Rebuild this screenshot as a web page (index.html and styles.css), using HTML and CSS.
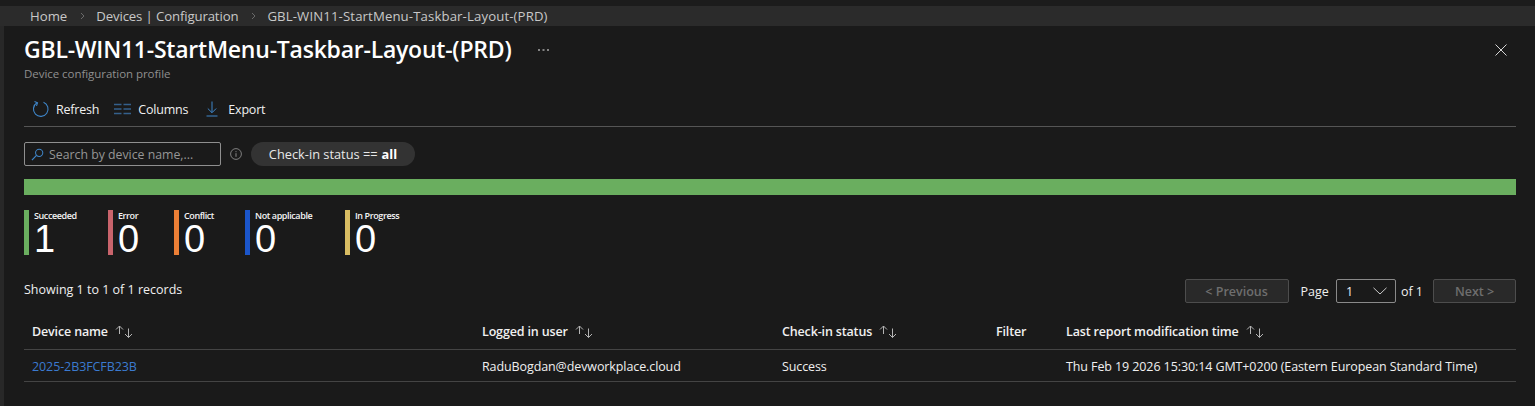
FILE: index.html
```html
<!DOCTYPE html>
<html lang="en">
<head>
  <meta charset="UTF-8">
  <title>GBL-WIN11-StartMenu-Taskbar-Layout-(PRD)</title>
  <link rel="stylesheet" href="styles.css">
</head>
<body>
  <svg class="sprites" width="0" height="0">
    <symbol id="sort" viewBox="0 0 18 13">
      <path d="M4.500 9V1M1 4.500L4.500 1 8 4.500M13.500 3.500v9M10 9l3.500 3.500L17 9" fill="none" stroke="#b4b4b4" stroke-width="1"/>
    </symbol>
  </svg>

  <nav class="breadcrumb">
    <span>Home</span>
    <svg class="crumb-sep" viewBox="0 0 6 8"><path d="M2 1l3 3-3 3" fill="none" stroke="#7a7a7a" stroke-width="0.8"/></svg>
    <span class="crumb-mid">Devices | Configuration</span>
    <svg class="crumb-sep" viewBox="0 0 6 8"><path d="M2 1l3 3-3 3" fill="none" stroke="#7a7a7a" stroke-width="0.8"/></svg>
    <span class="crumb-last">GBL-WIN11-StartMenu-Taskbar-Layout-(PRD)</span>
  </nav>

  <main class="blade">
    <header class="blade-head">
      <div class="title-row">
        <h1>GBL-WIN11-StartMenu-Taskbar-Layout-(PRD)</h1>
        <svg class="more" viewBox="0 0 11 3" width="11" height="3"><path d="M0 1h2M4.500 1h2M9 1h2" stroke="#a8a8a8" stroke-width="1.500"/></svg>
        <svg class="close" viewBox="0 0 12 12"><path d="M0.500 0.500l11 11M11.500 0.500l-11 11" stroke="#d6d6d6" stroke-width="1" fill="none"/></svg>
      </div>
      <p class="subtitle">Device configuration profile</p>
    </header>

    <div class="toolbar">
      <button class="tool tool-refresh">
        <svg viewBox="0 0 18 18" width="18" height="18"><path d="M11.500 2.300a7.300 7.300 0 1 1-6.500 0.500" fill="none" stroke="#3f86c9" stroke-width="1.100"/><path d="M2.500 1.500l3 1.300-1 3" fill="none" stroke="#3f86c9" stroke-width="1.100"/></svg>
        Refresh
      </button>
      <button class="tool tool-columns">
        <svg viewBox="0 0 17 12" width="17" height="12"><path d="M0 1.500h7.500M9.500 1.500h7.500M0 6h7.500M9.500 6h7.500M0 10.500h7.500M9.500 10.500h7.500" stroke="#34608c" stroke-width="1.300" fill="none"/></svg>
        Columns
      </button>
      <button class="tool tool-export">
        <svg viewBox="0 0 12 16" width="12" height="16"><path d="M6 0.500v11M1.800 7.500l4.200 4.200 4.200-4.200M0.500 15h11" stroke="#3f86c9" stroke-width="1" fill="none"/></svg>
        Export
      </button>
    </div>

    <div class="filters">
      <label class="search">
        <svg viewBox="0 0 14 14" width="13" height="13"><circle cx="8.800" cy="5.200" r="3.900" fill="none" stroke="#3f86c9" stroke-width="1.100"/><path d="M5.900 8L1 13" stroke="#3f86c9" stroke-width="1.300"/></svg>
        <span>Search by device name,...</span>
      </label>
      <svg class="info" viewBox="0 0 12 12" width="12" height="12"><circle cx="6" cy="6" r="5.400" fill="none" stroke="#8a8a8a" stroke-width="0.900"/><path d="M6 5.200v3.600M6 3.200v1" stroke="#8a8a8a" stroke-width="1"/></svg>
      <span class="pill">Check-in status == <b>all</b></span>
    </div>

    <div class="status-bar"></div>

    <div class="stats">
      <div class="stat stat-success"><span class="stat-label">Succeeded</span><span class="stat-num">1</span></div>
      <div class="stat stat-error"><span class="stat-label">Error</span><span class="stat-num">0</span></div>
      <div class="stat stat-conflict"><span class="stat-label">Conflict</span><span class="stat-num">0</span></div>
      <div class="stat stat-na"><span class="stat-label">Not applicable</span><span class="stat-num">0</span></div>
      <div class="stat stat-progress"><span class="stat-label">In Progress</span><span class="stat-num">0</span></div>
    </div>

    <div class="records-row">
      <span class="records">Showing 1 to 1 of 1 records</span>
      <div class="pager">
        <button class="page-btn page-prev">&lt; Previous</button>
        <span class="page-word">Page</span>
        <span class="page-select">1
          <svg viewBox="0 0 14 8" width="14" height="8"><path d="M0.500 0.800L7 7l6.500-6.200" fill="none" stroke="#c8c8c8" stroke-width="1"/></svg>
        </span>
        <span>of 1</span>
        <button class="page-btn page-next">Next &gt;</button>
      </div>
    </div>

    <div class="table">
      <div class="row head">
        <div class="col-head">Device name <svg class="sort"><use href="#sort"/></svg></div>
        <div class="col-head">Logged in user <svg class="sort"><use href="#sort"/></svg></div>
        <div class="col-head">Check-in status <svg class="sort"><use href="#sort"/></svg></div>
        <div class="col-head">Filter</div>
        <div class="col-head">Last report modification time <svg class="sort"><use href="#sort"/></svg></div>
      </div>
      <div class="row body">
        <div><a href="#">2025-2B3FCFB23B</a></div>
        <div>RaduBogdan@devworkplace.cloud</div>
        <div>Success</div>
        <div></div>
        <div>Thu Feb 19 2026 15:30:14 GMT+0200 (Eastern European Standard Time)</div>
      </div>
    </div>
  </main>
</body>
</html>
```

FILE: styles.css
```css
* {
  box-sizing: border-box;
}

html, body {
  height: 100%;
}

body {
  margin: 0;
  border-top: 6px solid #1c1c1c;
  background: #282828;
  color: #f0f0f0;
  font-family: "Open Sans", "Noto Sans", sans-serif;
  font-size: 12.5px;
  overflow: hidden;
}

.sprites {
  position: absolute;
}

.breadcrumb {
  height: 20px;
  padding-left: 30px;
  display: flex;
  align-items: center;
  background: #2b2b2b;
  color: #c8c8c8;
  font-size: 13.2px;
}

.crumb-mid {
  letter-spacing: -0.13px;
}

.crumb-last {
  letter-spacing: 0.12px;
}

.crumb-sep {
  width: 6px;
  height: 8px;
  margin: 0 11px 0 12px;
}

.blade {
  margin-left: 4px;
  padding: 0 19px 0 20px;
  height: 380px;
  background: #1a1a1a;
}

.blade-head {
  padding-top: 10px;
}

.title-row {
  display: flex;
  align-items: center;
  height: 26px;
}

h1 {
  margin: 0;
  font-size: 23px;
  font-weight: 600;
  letter-spacing: -0.23px;
  color: #fff;
  white-space: nowrap;
}

.more {
  margin-left: 27px;
  margin-top: 2px;
}

.close {
  width: 12px;
  height: 12px;
  margin-left: auto;
  margin-top: 2px;
  margin-right: 9px;
}

.subtitle {
  margin: 4px 0 0;
  font-size: 11.5px;
  letter-spacing: -0.05px;
  color: #8f8f8f;
}

.toolbar {
  margin-top: 13px;
  height: 33px;
  padding: 0 0 2px 8px;
  display: flex;
  align-items: center;
  border-bottom: 1px solid #555;
}

.tool {
  display: flex;
  align-items: center;
  padding: 0;
  border: 0;
  background: none;
  color: #f0f0f0;
  font: inherit;
  letter-spacing: -0.2px;
}

.tool-refresh svg {
  margin-right: 6px;
}

.tool-columns {
  margin-left: 15px;
}

.tool-columns svg {
  margin-right: 7px;
}

.tool-export {
  margin-left: 18px;
}

.tool-export svg {
  margin-right: 10px;
}

.filters {
  margin-top: 15px;
  display: flex;
  align-items: center;
  height: 24px;
}

.search {
  width: 197px;
  height: 24px;
  padding-left: 6px;
  display: flex;
  align-items: center;
  gap: 5px;
  border: 1px solid #8f8f8f;
  border-radius: 2px;
  color: #969696;
  font-size: 12.3px;
  white-space: nowrap;
}

.info {
  margin-left: 9px;
}

.pill {
  margin-left: 9px;
  width: 164px;
  height: 24px;
  border-radius: 12px;
  background: #333;
  display: flex;
  align-items: center;
  justify-content: center;
  gap: 4px;
  color: #e8e8e8;
  font-size: 12.8px;
}

.pill b {
  font-weight: 700;
  color: #fff;
}

.status-bar {
  margin-top: 13px;
  height: 16px;
  background: #6aae5f;
}

.stats {
  margin-top: 15px;
  display: flex;
}

.stat {
  height: 45px;
  border-left: 5px solid;
  padding-left: 5px;
  display: flex;
  flex-direction: column;
}

.stat-label {
  font-size: 9px;
  font-weight: 600;
  letter-spacing: -0.4px;
  line-height: 12px;
  color: #f4f4f4;
  white-space: nowrap;
}

.stat-num {
  margin-top: 1px;
  font-family: "Liberation Sans", sans-serif;
  font-size: 38px;
  line-height: 33px;
  color: #fff;
}

.stat-success { border-color: #6aae5f; width: 84px; }
.stat-error { border-color: #c9646c; width: 66px; }
.stat-conflict { border-color: #ec7f36; width: 71px; }
.stat-na { border-color: #1b55c9; width: 100px; }
.stat-progress { border-color: #d8bc62; }

.records-row {
  margin-top: 24px;
  height: 24px;
  display: flex;
  align-items: center;
  justify-content: space-between;
}

.records {
  margin-bottom: 3px;
}

.pager {
  display: flex;
  align-items: center;
}

.page-btn {
  height: 24px;
  border: 1px solid #4d4d4d;
  border-radius: 2px;
  background: #292929;
  color: #6e6e6e;
  font: inherit;
  font-weight: 600;
  padding: 0;
}

.page-prev { width: 104px; }
.page-next { width: 83px; margin-left: 10px; }

.page-word {
  margin-left: 12px;
  margin-right: 7px;
}

.page-select {
  width: 60px;
  height: 24px;
  margin-right: 5px;
  padding: 0 8px 0 9px;
  border: 1px solid #8a8a8a;
  border-radius: 2px;
  display: flex;
  align-items: center;
  justify-content: space-between;
}

.table {
  margin-top: 11px;
}

.row {
  display: grid;
  grid-template-columns: 450px 300px 214px 70px 1fr;
  padding-left: 8px;
  align-items: center;
  border-bottom: 1px solid #444;
  letter-spacing: -0.1px;
  white-space: nowrap;
}

.head {
  height: 36px;
  font-weight: 600;
  letter-spacing: -0.15px;
}

.col-head {
  display: flex;
  align-items: center;
  gap: 7px;
}

.body {
  height: 32px;
  padding-top: 2px;
}

.sort {
  width: 18px;
  height: 13px;
}

a {
  color: #3b7ad0;
  text-decoration: none;
}
```
